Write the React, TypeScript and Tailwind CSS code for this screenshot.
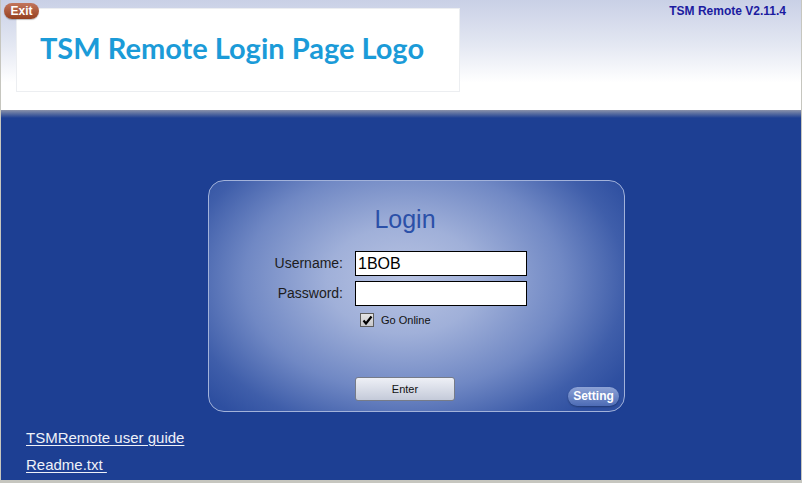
import type { ReactNode } from 'react'

function Field({ label, value }: { label: string; value?: string }) {
  return (
    <>
      <div className="flex items-center justify-end text-[14px] text-[#1c1c1c]">{label}</div>
      <div className="h-[25px] bg-white border border-black flex items-center pl-[2px] text-[16px] text-black">
        {value ?? ''}
      </div>
    </>
  )
}

function Link({ children }: { children: ReactNode }) {
  return <a className="text-[15px] leading-[16px] text-[#eef1f8] underline underline-offset-[2px] cursor-pointer">{children}</a>
}

export default function App() {
  return (
    <div className="w-[802px] h-[483px] flex flex-col overflow-hidden border-l border-r border-b-[3px] border-[#c6c6bf] font-['Liberation_Sans',Arial,sans-serif]">
      {/* header */}
      <div className="relative h-[110px] shrink-0 flex items-start justify-between bg-[linear-gradient(to_bottom,#c9d0e6_0%,#e3e7f2_40%,#ffffff_75%)]">
        <div className="ml-[15px] mt-[8px] w-[444px] h-[84px] bg-white border border-[#eceef1] pl-[23px] pt-[21px]">
          <span className="font-['Lato',sans-serif] font-bold text-[29px] leading-[35px] text-[#1b9bd8]">TSM Remote Login Page Logo</span>
        </div>
        <div className="mt-[4px] mr-[15px] text-[12px] leading-[14px] font-bold text-[#1b1ba0]">TSM Remote V2.11.4</div>
        <button className="absolute left-[3px] top-[3px] w-[35px] h-[16px] rounded-full bg-[linear-gradient(to_bottom,#c2755c,#95401f)] text-white font-bold text-[12px] leading-[16px] shadow-[0_1px_1px_rgba(0,0,0,0.25)]">
          Exit
        </button>
      </div>

      {/* body */}
      <div className="flex-1 flex flex-col bg-[#1d3f93]">
        <div className="h-[8px] bg-[linear-gradient(to_bottom,#8a92aa,#1d3f93)]" />

        <div className="mt-[62px] ml-[207px] w-[417px] h-[232px] rounded-[16px] border border-[#a2b2da] flex flex-col pt-[23px] pb-[5px] bg-[radial-gradient(ellipse_62%_78%_at_47%_43%,#b8c3e2_0%,#a0b0d9_30%,#7088c4_62%,#3f5eaa_86%,#2e4fa0_100%)]">
          <div className="text-center pr-[23px] text-[25px] leading-[30px] text-[#2b50a8]">Login</div>

          <div className="mt-[17px] grid grid-cols-[134px_172px] gap-x-[12px] gap-y-[5px]">
            <Field label="Username:" value="1BOB" />
            <Field label="Password:" />
          </div>

          <div className="mt-[7px] pl-[151px] flex items-center gap-[7px]">
            <div className="w-[14px] h-[14px] border border-[#5e5e5e] bg-[linear-gradient(to_bottom,#e4e4e4,#c8c8cc)] flex items-center justify-center">
              <svg width="11" height="11" viewBox="0 0 11 11">
                <path d="M1.5 5.5 L4 8.5 L9.5 1.5" fill="none" stroke="#000" strokeWidth="2.2" />
              </svg>
            </div>
            <span className="text-[11px] leading-[14px] text-[#111]">Go Online</span>
          </div>

          <div className="mt-auto flex items-end pl-[146px]">
            <button className="mb-[5px] w-[100px] h-[24px] rounded-[3px] border border-[#767b88] bg-[linear-gradient(to_bottom,#eef0f6,#c4cad9)] text-[11px] text-[#111]">
              Enter
            </button>
            <button className="ml-auto mr-[5px] w-[51px] h-[19px] rounded-full bg-[linear-gradient(to_bottom,#8ea3d6,#4c6bb5)] text-white font-bold text-[12px] leading-[19px] shadow-[0_1px_2px_rgba(0,0,0,0.3)]">
              Setting
            </button>
          </div>
        </div>

        <div className="mt-[18px] ml-[25px] flex flex-col items-start gap-[11px]">
          <Link>TSMRemote user guide</Link>
          <Link>Readme.txt&nbsp;</Link>
        </div>
      </div>
    </div>
  )
}
